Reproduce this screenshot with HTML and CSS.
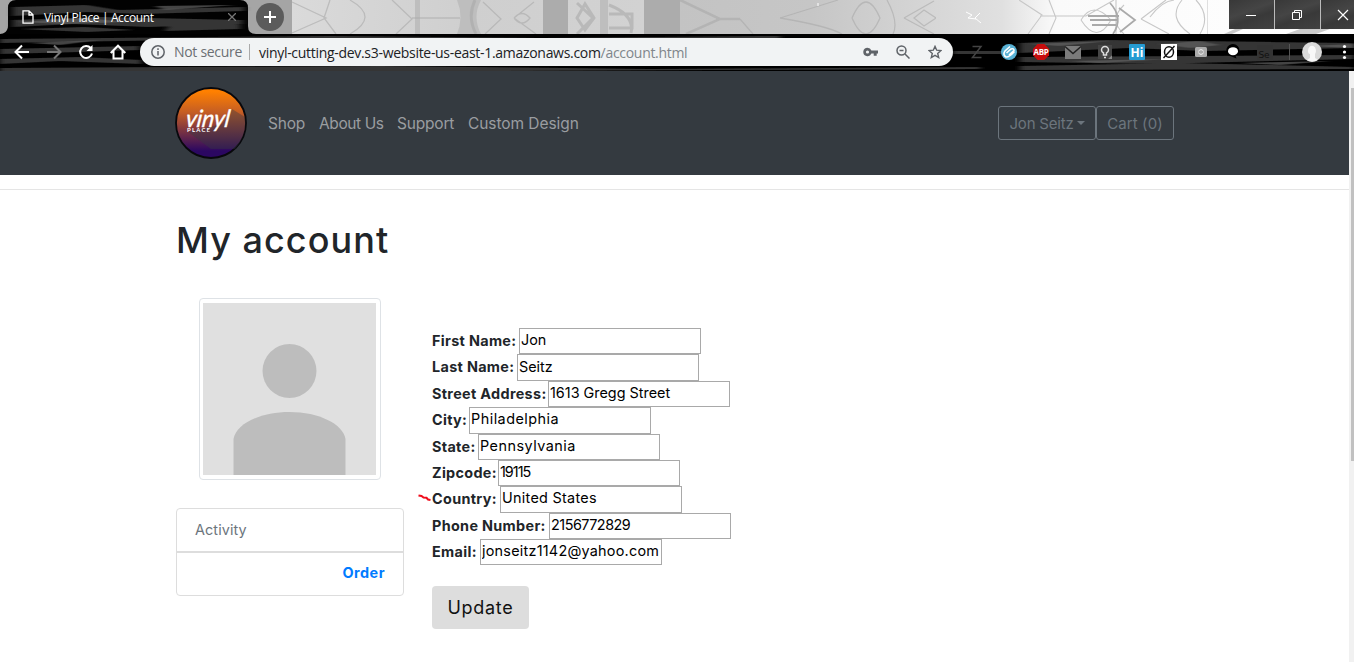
FILE: index.html
```html
<!DOCTYPE html>
<html lang="en">
<head>
<meta charset="utf-8">
<title>Vinyl Place | Account</title>
<link rel="stylesheet" href="styles.css">
</head>
<body>
<header class="browser">
  <svg class="theme" viewBox="0 0 1354 71" aria-hidden="true">
    <defs>
      <linearGradient id="sky" x1="0" x2="1">
        <stop offset="0" stop-color="#b4b4b4"/><stop offset=".6" stop-color="#c6c6c6"/>
        <stop offset=".74" stop-color="#e0e0e0"/><stop offset=".78" stop-color="#fafafa"/><stop offset="1" stop-color="#fff"/>
      </linearGradient>
      <linearGradient id="mist" x1="0" x2="1">
        <stop offset="0" stop-color="#dadada"/><stop offset=".5" stop-color="#cfcfcf"/><stop offset="1" stop-color="#d2d2d2"/>
      </linearGradient>
      <filter id="soft" x="0" y="0" width="1" height="1"><feGaussianBlur stdDeviation=".7"/></filter>
      <filter id="streak" x="0" y="0" width="1" height="1"><feGaussianBlur stdDeviation="3 .6"/></filter>
    </defs>
    <path fill="#000" d="M0 0h1354v71H0z"/>
    <path fill="url(#sky)" d="M0 0h1354v34H0z"/>
    <path fill="#a5a5a5" d="M0 0h292v34H0z"/>
    <path fill="url(#mist)" d="M292 0h352v34H292z"/>
    <path fill="#acacac" d="M543 0h25v34h-25zM644 0h36v34h-36z"/>
    <path fill="#bebebe" d="M457 0h24q-9 17 0 34h-24q7-17 0-34zM600 0h8v34h-8zM415 0h5v34h-5z"/>
    <g fill="none" stroke="#aaa" stroke-width="1.300" opacity=".6" filter="url(#soft)">
      <path d="M292 2l34 16-34 15M330 0l-6 18 12 16M350 0q30 17 0 34M392 0l20 19-16 15M412 18h48M483 2l18 17-16 15M514 18l20-16M514 18l22 16M514 18q8-9 16 0-8 10-16 0"/>
      <path stroke-width="3" d="M475 0q-8 17 1 34M577 3l16 15-16 16M577 18l8-14 9 14-9 12zM609 14h23v14h-23M609 5q26 10 22 28"/>
      <path stroke-width="2.500" d="M680 0l40 19-34 15M716 19h24"/>
      <path d="M740 19l13 15M780 18l58-18M780 18q48 8 62 16M852 18q14-32 28 0-14 32-28 0M887 0q12 22 6 34M904 18l30-17M904 18l30 16M914 18l10-8 12 8-12 8z"/>
    </g>
    <g fill="none" stroke="#c8c8c8" stroke-width="1.100" filter="url(#soft)">
      <path d="M1019 0l23 15-14 19M1040 16h46l28-16M1049 0l7 18-7 16M1081 20q12-20 30 0-14 25-30 0M1116 0v34M1124 5q-16 15 0 29M1141 19l25-19M1141 19l28 15M1150 17q12-16 24-17M1182 0q-15 18 8 34M1196 0q15 16 4 34M1208 0v34"/>
      <path stroke="#aaa" stroke-width="1.800" d="M1088 16h31M1090 20h28M1092 25h24M1110 3q14 15 3 31M1119 8l16 12-15 12"/>
    </g>
    <path fill="#999" opacity=".5" filter="url(#soft)" d="M1235 29h8l-11 5h-8zM1300 29h30l-14 5h-30z"/>
    <path stroke="#fff" stroke-width="1" d="M818 3v3M966 12l6 3-4 3 8 1M980 13l-5 5 6 5" fill="none"/>
    <path fill="#020202" d="M0 34c4 0 8-3 8-8V8q0-8 8-8h224q8 0 8 8v18q0 8 8 8z"/>
    <g fill="#353535" filter="url(#streak)">
      <path d="M13 7l74-2 31 5 126-3v4l-102 3-54-2-75 4zM13 20l87-3 142 3v4l-94 3-74-3-61 3zM20 29l65-2 49 3-47 2zM170 24l70-3v8l-75 2z"/>
      <path d="M0 39l330-3 210 2 240-2v3l-300 3-300-2L0 43zM0 49l139-3v4L80 52 0 54zM0 59l80-2 61 3v4L60 61 0 64zM0 68l380-2 270 3 330-2v2L500 71H0zM1020 43l85-3 249 3v5l-150 3-75-3-109 5zM1020 57l334-2v4l-199 5-135-2zM1020 66l160-3 174 4v2l-334 1zM953 51h60v3h-60z"/>
    </g>
    <g fill="#626262" opacity=".7" filter="url(#streak)"><path d="M16 22l70-4 40 4-60 2zM155 6l80-1-70 5zM30 43l70-3-40 5zM1030 44l80-3-50 5zM1160 44l40-3 20 4-30 3zM1070 61l98-2-68 4zM1240 63l90-2-50 4zM1310 46l44-2v4z"/></g>
  </svg>
  <div class="tabs">
    <div class="tab">
      <svg width="12" height="14" viewBox="0 0 12 14" fill="none" stroke="#fff" stroke-width="1.3"><path d="M1 .8h6l4 4v8.4H1zM7 1v4h4"/></svg>
      <span class="tab-title">Vinyl Place | Account</span>
      <svg class="tab-close" width="8" height="8" viewBox="0 0 8 8" stroke="#777" stroke-width="1.3"><path d="M0 0l8 8M8 0L0 8"/></svg>
    </div>
    <span class="new-tab"><svg width="12" height="12" viewBox="0 0 12 12" stroke="#fff" stroke-width="2"><path d="M0 6h12M6 0v12"/></svg></span>
    <div class="window-buttons">
      <span><svg width="12" height="12" viewBox="0 0 12 12" fill="none" stroke="#fff"><path d="M1 6.5h10"/></svg></span>
      <span><svg width="12" height="12" viewBox="0 0 12 12" fill="none" stroke="#fff"><path d="M1.5 3.5h7v7h-7zM3.5 3.5v-2h7v7h-2"/></svg></span>
      <span><svg width="12" height="12" viewBox="0 0 12 12" fill="none" stroke="#fff" stroke-width="1.2"><path d="M1 1l10 10M11 1L1 11"/></svg></span>
    </div>
  </div>
  <div class="toolbar">
    <div class="nav-icons">
      <svg width="16" height="16" viewBox="0 0 16 16" fill="none" stroke="#fff" stroke-width="2"><path d="M15 8H2M8 1.5L1.5 8 8 14.5"/></svg>
      <svg width="16" height="16" viewBox="0 0 16 16" fill="none" stroke="#777" stroke-width="2"><path d="M1 8h13M8 1.5L14.500 8 8 14.500"/></svg>
      <svg width="16" height="16" viewBox="0 0 16 16" fill="none" stroke="#fff" stroke-width="2"><path d="M12.700 4A6 6 0 1 0 14 9.500"/><path d="M14.500 1v6h-6z" fill="#fff" stroke="none"/></svg>
      <svg width="16" height="16" viewBox="0 0 16 16" fill="none" stroke="#fff" stroke-width="2"><path d="M.7 9L8 1.700 15.300 9M3.500 7v7.500h9V7"/></svg>
    </div>
    <div class="address">
      <svg width="14" height="14" viewBox="0 0 14 14" fill="none" stroke="#5f6368" stroke-width="1.500"><circle cx="7" cy="7" r="6.200"/><path d="M7 6v4.500M7 3.300v1.600"/></svg>
      <span class="not-secure">Not secure</span>
      <span class="url">vinyl-cutting-dev.s3-website-us-east-1.amazonaws.com<span class="path">/account.html</span></span>
      <div class="address-actions">
        <svg width="15" height="10" viewBox="0 0 15 10"><path fill="#5f6368" fill-rule="evenodd" d="M4.500.7a4.200 4.200 0 0 1 3.900 2.800H15v3h-1.300v2.300h-3V6.500H8.400A4.200 4.200 0 1 1 4.500.7zm0 2.700a1.600 1.600 0 1 0 0 3.200 1.600 1.600 0 0 0 0-3.200z"/></svg>
        <svg width="14" height="14" viewBox="0 0 14 14" fill="none" stroke="#5f6368" stroke-width="1.500"><circle cx="5.500" cy="5.500" r="4.500"/><path d="M9 9l4.500 4.500M3.500 5.500h4"/></svg>
        <svg width="14" height="14" viewBox="0 0 14 14" fill="none" stroke="#5f6368" stroke-width="1.400"><path d="M7 1.400l1.700 3.800 4.200.4-3.200 2.800 1 4.100L7 10.300l-3.700 2.200 1-4.100-3.200-2.800 4.200-.4z"/></svg>
      </div>
    </div>
    <svg class="extensions" width="390" height="36" viewBox="0 0 390 36">
      <path d="M9.500 12.500h8.500l-8.500 11h9" fill="none" stroke="#444" stroke-width="1.500"/>
      <circle cx="46" cy="18" r="8" fill="#59b2d5"/><path d="M47 12.500l-5 4.500q-2.500 4 1 6 3 .5 8.500-5.500M43.500 19l4.500-4q3-1 3 1.500l-5 4.500" fill="none" stroke="#fff" stroke-width="1.600"/>
      <path d="M74.700 10h6.600l4.700 4.700v6.600l-4.700 4.700h-6.600L70 21.300v-6.600z" fill="#c70d0d"/><text class="abp" x="78" y="21">ABP</text>
      <path d="M102 12h16v13h-16z" fill="#7b7b7b"/><path d="M102 12.500l8 7 8-7" fill="none" stroke="#222" stroke-width="1.500"/>
      <path d="M135 11h14v10l-4 4h-10z" fill="#444"/><path d="M140.500 21v-2q-2-1-2-3a3.500 3.500 0 0 1 7 0q0 2-2 3v2zM141 23.500h2" fill="none" stroke="#ddd" stroke-width="1.500"/><path d="M145 25l4-4v4z" fill="#888"/>
      <rect x="166" y="10" width="16" height="16" rx="1" fill="#259bd2"/><text class="hi" x="174" y="22.500">Hi</text>
      <path d="M198 10h16v16h-16z" fill="#fff"/><ellipse cx="206" cy="18" rx="4.500" ry="5.200" fill="none" stroke="#111" stroke-width="1.500"/><path d="M200.500 24l11-12" stroke="#111" stroke-width="1.400"/>
      <rect x="232" y="13" width="12" height="10" rx="1.500" fill="#aaa"/><path d="M235.500 17.500a2.600 2.600 0 0 1 5 0M240.500 18.500a2.600 2.600 0 0 1-5 0" fill="none" stroke="#eee"/>
      <path d="M263.500 17a6.500 6 0 1 1 9 4.500l1 3-5-2q-5-1-5-5.500z" fill="#000"/><ellipse cx="270" cy="17.200" rx="5" ry="4" fill="#fff"/>
      <path d="M294 11h16v15h-16z" fill="#333"/><text class="se" x="301" y="24">Se</text>
      <path d="M326.500 10v16" stroke="#555"/><circle cx="349" cy="18" r="10" fill="#dadada"/><path d="M345 17a4 5 0 1 1 7 3v4l3 2q-6 3-11 0l3-2v-4q-2 0-2-3z" fill="#f8f8f8"/>
      <g fill="#fff"><circle cx="381.500" cy="12.500" r="1.600"/><circle cx="381.500" cy="18" r="1.600"/><circle cx="381.500" cy="23.500" r="1.600"/></g>
    </svg>
  </div>
</header>
<div class="viewport">
  <div class="page">
    <nav class="navbar">
      <svg class="logo" width="72" height="72" viewBox="0 0 72 72">
        <defs><linearGradient id="sunset" x2="0" y2="1"><stop offset=".05" stop-color="#ff8000"/><stop offset=".35" stop-color="#c45d25"/><stop offset=".9" stop-color="#2b0761"/></linearGradient></defs>
        <circle cx="36" cy="36" r="35" fill="url(#sunset)" stroke="#08080c" stroke-width="1.800"/>
        <path d="M57 22l13 8q2 18-10 32H36L13 45l34-8z" fill="#343a40" opacity=".4"/>
        <text class="logo-word" transform="translate(10 40) skewX(-8)" textLength="44" lengthAdjust="spacingAndGlyphs">vinyl</text>
        <text class="logo-place" x="12" y="45" textLength="23">PLACE</text>
      </svg>
      <div class="links"><a class="l-shop">Shop</a><a class="l-about">About Us</a><a class="l-support">Support</a><a class="l-custom">Custom Design</a></div>
      <div class="user-buttons"><button class="btn-user">Jon Seitz<i class="caret"></i></button><button class="btn-cart">Cart (0)</button></div>
    </nav>
    <hr class="rule">
    <main class="container">
      <h1>My account</h1>
      <div class="columns">
        <aside>
          <svg class="avatar" viewBox="0 0 173 172" preserveAspectRatio="none"><path fill="#e0e0e0" d="M0 0h173v172H0z"/><circle cx="86.500" cy="68" r="27" fill="#bdbdbd"/><path fill="#bdbdbd" d="M30.500 172v-36C33 121 57 109 86.500 109s53.500 12 56 27v36z"/></svg>
          <ul class="activity"><li>Activity</li><li class="order"><a>Order</a></li></ul>
        </aside>
        <form>
          <div class="row"><label class="w-first">First Name:</label><input value="Jon"></div>
          <div class="row"><label class="w-last">Last Name:</label><input value="Seitz"></div>
          <div class="row"><label class="w-street">Street Address:</label><input value="1613 Gregg Street"></div>
          <div class="row"><label class="w-city">City:</label><input value="Philadelphia" class="i-wide"></div>
          <div class="row"><label class="w-state">State:</label><input value="Pennsylvania" class="i-wide"></div>
          <div class="row"><label class="w-zip">Zipcode:</label><input value="19115" class="i-zip"></div>
          <div class="row"><label class="w-country">Country:</label><input value="United States" class="i-open">
            <svg class="mark" width="13" height="8" viewBox="0 0 13 8" fill="none" stroke="#f00d1c" stroke-width="2"><path d="M.5 1.500l3 .5 2 1.500 3 .3 1.500 1.700 2.500.5"/></svg></div>
          <div class="row"><label class="w-phone">Phone Number:</label><input value="2156772829" class="i-phone"></div>
          <div class="row"><label class="w-email">Email:</label><input value="jonseitz1142@yahoo.com" class="i-email"></div>
          <button class="update" type="button">Update</button>
        </form>
      </div>
    </main>
  </div>
  <div class="scrollbar"><div class="thumb"></div></div>
</div>
</body>
</html>
```
FILE: styles.css
```css
* { box-sizing: border-box; }
body { margin: 0; height: 662px; overflow: hidden; background: #fff; color: #212529; font-family: Inter, "Open Sans", sans-serif; font-size: 14.4px; }
svg { display: block; flex: none; }
.browser { height: 71px; position: relative; font-family: "Open Sans", "Noto Sans", sans-serif; }
.theme { position: absolute; inset: 0; width: 1354px; height: 71px; }
.tabs { position: relative; display: flex; height: 34px; }
.tab { display: flex; align-items: center; width: 240px; margin-left: 8px; padding: 0 12px 0 14px; color: #fff; }
.tab-title { margin-left: 10px; font-size: 12px; letter-spacing: -.36px; white-space: nowrap; }
.tab-close { margin-left: auto; }
.new-tab { width: 28px; height: 28px; margin: 3px 0 0 8px; border-radius: 50%; background: #5b5b5b; display: grid; place-items: center; }
.window-buttons { margin-left: auto; width: 125px; height: 29px; display: flex; gap: 1px; background: #bbb; overflow: hidden; }
.window-buttons span { flex: 0 0 45px; display: grid; place-items: center; padding-right: 2px; background: linear-gradient(160deg, #383838, #454545 40%, #393939 60%, #424242); }
.toolbar { position: relative; display: flex; height: 36px; align-items: center; }
.nav-icons { display: flex; gap: 16px; width: 140px; padding-left: 14px; }
.address { width: 813px; height: 28px; border-radius: 14px; background: #f1f3f4; display: flex; align-items: center; padding: 0 11px; font-size: 14px; white-space: nowrap; color: #202124; }
.not-secure { width: 76px; margin-left: 9px; padding-right: 8px; border-right: 1px solid #aaa; line-height: 16px; color: #6b6f73; letter-spacing: -.3px; }
.url { margin-left: 9px; letter-spacing: -.3px; }
.path { color: #80868b; }
.address-actions { margin-left: auto; display: flex; align-items: center; gap: 18px; }
.extensions { margin-left: 10px; }
.abp { font: bold 8px "Open Sans", sans-serif; fill: #fff; text-anchor: middle; letter-spacing: -.3px; }
.hi { font: bold 12px "Open Sans", sans-serif; fill: #fff; text-anchor: middle; }
.se { font: 9px "DejaVu Sans", sans-serif; fill: #111; text-anchor: middle; }
.viewport { display: flex; height: 591px; }
.page { width: 1349px; }
.scrollbar { width: 5px; padding: 17px 0 0 2px; background: #f1f1f1; }
.thumb { height: 373px; background: #c1c1c1; }
.navbar { height: 104px; background: #343a40; display: flex; align-items: center; padding: 0 175px; }
.logo-word { font: italic 400 24px Lato, sans-serif; fill: #fff; stroke: #fff; stroke-width: .4px; }
.logo-place { font: bold 6px Lato, sans-serif; fill: #fff; }
.links { display: flex; gap: 14px; margin-left: 21px; font-size: 15.500px; color: #9a9da0; white-space: nowrap; }
.l-shop { width: 37px; letter-spacing: -.2px; }
.l-about { width: 64px; letter-spacing: -.4px; }
.l-support { width: 57px; letter-spacing: -.2px; }
.l-custom { width: 111px; letter-spacing: -.07px; }
.user-buttons { display: flex; margin-left: auto; }
.user-buttons button { height: 34px; border: 1px solid #6c757d; border-radius: 3px; background: none; color: #6c757d; font: 15px Inter, sans-serif; padding: 0 10px; white-space: nowrap; }
.btn-user { width: 98px; display: flex; align-items: center; justify-content: center; letter-spacing: -.2px; }
.btn-cart { width: 78px; }
.user-buttons .btn-cart { padding: 0 8px; letter-spacing: .1px; }
.caret { margin-left: 3px; border: 4px solid transparent; border-top-color: #6c757d; border-bottom: 0; }
.rule { border: 0; border-top: 1px solid #e5e5e5; margin: 14px 0 0; }
.container { padding: 28px 0 0 176px; }
h1 { margin: 0; font-size: 36px; font-weight: 500; line-height: 44px; letter-spacing: 1.050px; white-space: nowrap; }
.columns { display: flex; gap: 28px; padding-top: 36px; }
aside { width: 228px; }
.avatar { width: 182px; height: 182px; margin-left: 23px; padding: 4px 4px 4px 3px; border: 1px solid #dee2e6; border-radius: 4px; }
.activity { list-style: none; height: 88px; margin: 28px 0 0; padding: 0; border: 1px solid #ddd; border-radius: 4px; }
.activity li { height: 42px; padding: 0 18px; line-height: 42px; color: #6c757d; letter-spacing: .1px; }
.activity .order { border-top: 2px solid #ddd; text-align: right; font-weight: 700; color: #007bff; line-height: 40px; letter-spacing: .5px; }
form { padding-top: 30px; }
.row { position: relative; display: flex; height: 26.375px; white-space: nowrap; }
label { flex: none; font-weight: 700; line-height: 25px; letter-spacing: .33px; }
input { width: 182px; height: 26.375px; border: 1px solid #a9a9a9; padding: 0 1px 3px; outline: 0; background: #fff; color: #000; font: 14.400px Inter, sans-serif; }
.w-first { width: 87px; } .w-last { width: 85px; } .w-street { width: 116px; }
.w-city { width: 37px; } .w-state { width: 46px; } .w-zip { width: 66px; }
.w-country { width: 68px; } .w-phone { width: 117px; } .w-email { width: 48px; }
.i-wide { letter-spacing: .48px; }
.i-zip { letter-spacing: -1px; }
.i-open { letter-spacing: .28px; }
.i-phone { letter-spacing: -.5px; }
.i-email { letter-spacing: .24px; }
.mark { position: absolute; left: -14px; top: 8px; }
.update { display: block; margin-top: 20.600px; width: 97px; height: 43px; border: 0; border-radius: 4px; background: #ddd; color: #111; font: 18px Inter, sans-serif; letter-spacing: .7px; }
```
